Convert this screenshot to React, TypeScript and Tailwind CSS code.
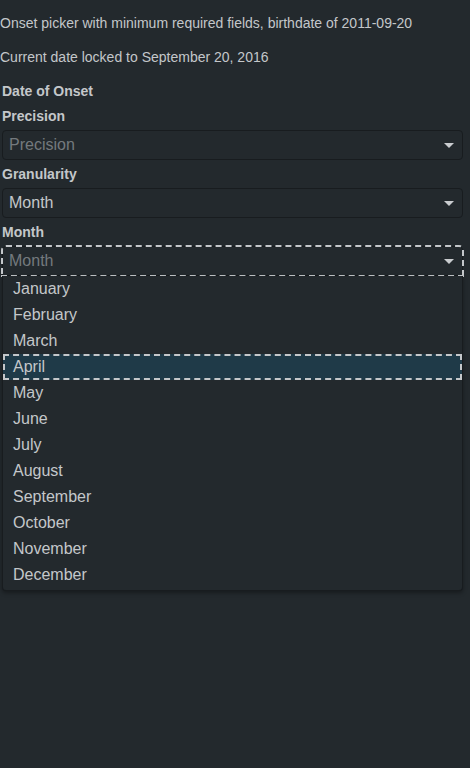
import React from "react";

const months = [
  "January",
  "February",
  "March",
  "April",
  "May",
  "June",
  "July",
  "August",
  "September",
  "October",
  "November",
  "December",
];

const Caret = () => (
  <svg width="10" height="5" viewBox="0 0 10 5" className="shrink-0">
    <path d="M0 0 L10 0 L5 5 Z" fill="#c9cccf" />
  </svg>
);

interface SelectProps {
  value?: string;
  placeholder: string;
  focused?: boolean;
}

const Select: React.FC<SelectProps> = ({ value, placeholder, focused }) => (
  <div
    className={`h-[30px] w-[461px] flex items-center justify-between pl-[6px] pr-[8px] rounded-[4px] border border-[#181c1f] bg-[#23292d] text-[16px] ${
      focused ? "outline-2 outline-dashed outline-[#c4c7ca] outline-offset-[-1px] rounded-b-none" : ""
    }`}
  >
    <span className={value ? "text-[#c4c7ca]" : "text-[#74797d]"}>
      {value ?? placeholder}
    </span>
    <Caret />
  </div>
);

export default function App() {
  const active = "April";
  return (
    <div
      className="flow-root min-h-screen bg-[#23292d] text-[#c4c7ca]"
      style={{ fontFamily: '"Liberation Sans", Arial, sans-serif' }}
    >
      <p className="mt-[13px] mb-[14px] text-[14px] leading-5">
        Onset picker with minimum required fields, birthdate of 2011-09-20
      </p>
      <p className="my-[14px] text-[14px] leading-5">
        Current date locked to September 20, 2016
      </p>

      <div className="px-[2px] flex flex-col gap-1 text-[14px] leading-5">
        <div className="font-bold mb-[1px]">Date of Onset</div>
        <label className="font-bold">Precision</label>
        <Select placeholder="Precision" />
        <label className="font-bold">Granularity</label>
        <Select placeholder="Granularity" value="Month" />
        <label className="font-bold">Month</label>
        <div className="relative">
          <Select placeholder="Month" focused />
          {/* open month listbox */}
          <ul className="absolute left-0 top-[30px] w-[461px] pb-[2px] bg-[#23292d] border border-t-0 border-[#181c1f] rounded-b-[4px] shadow-[0_2px_4px_rgba(0,0,0,0.35)] text-[16px] z-10">
            {months.map((m) => (
              <li
                key={m}
                className={`h-[26px] flex items-center pl-[10px] ${
                  m === active
                    ? "bg-[#1f3a48] outline-2 outline-dashed outline-[#c4c7ca] outline-offset-[-2px]"
                    : ""
                }`}
              >
                {m}
              </li>
            ))}
          </ul>
        </div>
      </div>
    </div>
  );
}
